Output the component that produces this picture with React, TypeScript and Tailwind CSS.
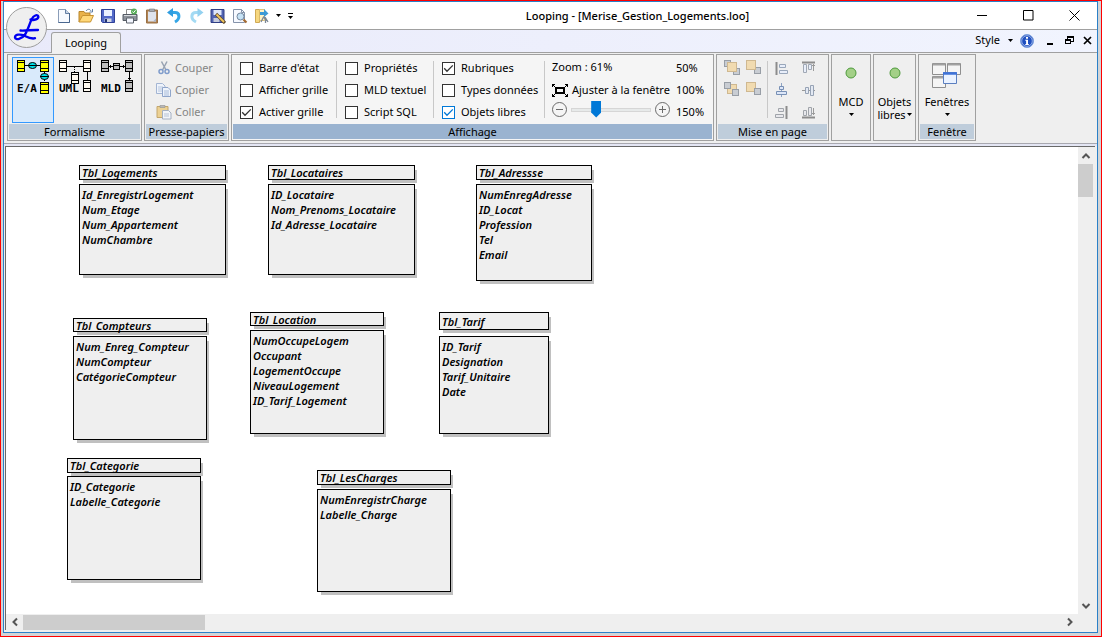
import { useState } from "react";
import type { ReactNode } from "react";

type Entity = {
  name: string;
  x: number;
  y: number;
  w: number;
  headH: number;
  gap: number;
  bodyH: number;
  fields: string[];
};

const ENTITIES: Entity[] = [
  { name: "Tbl_Logements", x: 73, y: 18, w: 147, headH: 15, gap: 4, bodyH: 91, fields: ["Id_EnregistrLogement", "Num_Etage", "Num_Appartement", "NumChambre"] },
  { name: "Tbl_Locataires", x: 262, y: 18, w: 147, headH: 15, gap: 4, bodyH: 91, fields: ["ID_Locataire", "Nom_Prenoms_Locataire", "Id_Adresse_Locataire"] },
  { name: "Tbl_Adressse", x: 470, y: 18, w: 116, headH: 15, gap: 4, bodyH: 97, fields: ["NumEnregAdresse", "ID_Locat", "Profession", "Tel", "Email"] },
  { name: "Tbl_Compteurs", x: 67, y: 171, w: 134, headH: 14, gap: 4, bodyH: 104, fields: ["Num_Enreg_Compteur", "NumCompteur", "CatégorieCompteur"] },
  { name: "Tbl_Location", x: 244, y: 165, w: 134, headH: 14, gap: 4, bodyH: 104, fields: ["NumOccupeLogem", "Occupant", "LogementOccupe", "NiveauLogement", "ID_Tarif_Logement"] },
  { name: "Tbl_Tarif", x: 433, y: 165, w: 110, headH: 18, gap: 6, bodyH: 98, fields: ["ID_Tarif", "Designation", "Tarif_Unitaire", "Date"] },
  { name: "Tbl_Categorie", x: 61, y: 311, w: 134, headH: 15, gap: 3, bodyH: 104, fields: ["ID_Categorie", "Labelle_Categorie"] },
  { name: "Tbl_LesCharges", x: 311, y: 323, w: 134, headH: 15, gap: 4, bodyH: 103, fields: ["NumEnregistrCharge", "Labelle_Charge"] },
];

function EntityBox({ e }: { e: Entity }) {
  return (
    <article
      className="absolute flex flex-col text-[11px] leading-[15px] font-semibold text-black italic"
      style={{ left: e.x, top: e.y, width: e.w, gap: e.gap }}
    >
      <h2
        className="flex items-center border border-black bg-[#efefef] px-0.5 whitespace-nowrap shadow-[3px_4px_0_-1px_#c0c0c0]"
        style={{ height: e.headH }}
      >
        {e.name}
      </h2>
      <ul
        className="border border-black bg-[#efefef] px-0.5 pt-0.5 whitespace-nowrap shadow-[3px_4px_0_-1px_#c0c0c0]"
        style={{ height: e.bodyH }}
      >
        {e.fields.map((f) => (
          <li key={f}>{f}</li>
        ))}
      </ul>
    </article>
  );
}

function Group({ title, className, tone = "bg-[#bfcddb]", bg = "bg-[#efefef]", children }: { title?: string; className: string; tone?: string; bg?: string; children: ReactNode }) {
  return (
    <section className={`flex shrink-0 flex-col border border-[#a0a0a0] p-px ${bg} ${className}`}>
      <div className="flex min-h-0 flex-1">{children}</div>
      {title && <h3 className={`h-[15px] text-center leading-[15px] whitespace-nowrap ${tone}`}>{title}</h3>}
    </section>
  );
}

function Check({ label, on = false, accent = false }: { label: string; on?: boolean; accent?: boolean }) {
  const [checked, setChecked] = useState(on);
  return (
    <label className="flex h-[22px] items-center gap-1.5 whitespace-nowrap">
      <span className="grid size-[13px]">
        <input
          type="checkbox"
          checked={checked}
          onChange={() => setChecked(!checked)}
          className={`col-start-1 row-start-1 size-[13px] appearance-none border bg-white ${accent ? "border-[#0078d7]" : "border-[#333333]"}`}
        />
        {checked && (
          <svg viewBox="0 0 13 13" className="pointer-events-none col-start-1 row-start-1 size-[13px]" fill="none" stroke={accent ? "#0078d7" : "#333333"} strokeWidth="1.3">
            <path d="M2.2 6.3 5 9.2 10.8 3.4" />
          </svg>
        )}
      </span>
      {label}
    </label>
  );
}

function Icon({ children, className = "size-4" }: { children: ReactNode; className?: string }) {
  return (
    <svg viewBox="0 0 16 16" className={className} fill="none" aria-hidden="true">
      {children}
    </svg>
  );
}

function Caret() {
  return (
    <svg viewBox="0 0 5 3" className="h-[3px] w-[5px] shrink-0" aria-hidden="true">
      <path d="M0 0h5L2.5 3z" fill="#000" />
    </svg>
  );
}

const quickTools: { label: string; icon: ReactNode }[] = [
  {
    label: "Nouveau",
    icon: (
      <Icon>
        <path d="M2.5 1.5h7l4 4v9h-11z" fill="#f7faff" stroke="#8b9db8" />
        <path d="M9.5 1.5v4h4" fill="#c5d3e6" stroke="#6580a5" />
        <path d="M13.5 5v9.5h-11" stroke="#49678f" />
      </Icon>
    ),
  },
  {
    label: "Ouvrir",
    icon: (
      <Icon>
        <path d="M1 14V3.5h5l1 1.5h5v3" fill="#e9b24a" stroke="#b8862c" />
        <path d="M4.5 7.5h11L12.5 14H1z" fill="#ffd879" stroke="#c79231" />
        <path d="M8 3c2-2.5 4-2 5 0M14.5 1v3h-3" stroke="#5f7fa6" />
      </Icon>
    ),
  },
  {
    label: "Enregistrer",
    icon: (
      <Icon>
        <path d="M1.5 1.5h13v13h-12l-1-1z" fill="#5269c8" stroke="#2e4096" />
        <path d="M4 2h8v6H4z" fill="#eaf1ff" />
        <path d="M4.5 10.5h7V14h-7z" fill="#d2d8e5" />
        <path d="M5 11h2v3H5z" fill="#24356f" />
      </Icon>
    ),
  },
  {
    label: "Imprimer",
    icon: (
      <Icon>
        <path d="M4.5 6V1.5h6V6" fill="#fff" stroke="#8a8a8a" />
        <path d="M1 6.5h14v6H1z" fill="#8d929a" stroke="#555b64" />
        <path d="M2 7.5h12" stroke="#d9dce0" />
        <path d="M4.5 10h7v5h-7z" fill="#f4f7ff" stroke="#5e646d" />
        <circle cx="12" cy="3.5" r="3" fill="#58ad58" />
        <path d="m10.5 3.5 1 1.2 2-2.4" stroke="#fff" />
      </Icon>
    ),
  },
  {
    label: "Coller",
    icon: (
      <Icon>
        <path d="M2.5 2h11v13h-11z" fill="#b08352" stroke="#9a7044" />
        <path d="M4 3.5h8v10H4z" fill="#dfe3ec" />
        <path d="M9 13.5l3-3v3z" fill="#a9b4c8" />
        <path d="M5.5 1h5v2.5h-5z" fill="#a7abb2" stroke="#72767d" strokeWidth=".6" />
      </Icon>
    ),
  },
  {
    label: "Annuler",
    icon: (
      <Icon>
        <path d="M5 4.5h4c5 0 5.5 6.5 0 9.5" stroke="#36a6e6" strokeWidth="3" />
        <path d="M7 0v9L1 4.5z" fill="#2f9de0" />
      </Icon>
    ),
  },
  {
    label: "Rétablir",
    icon: (
      <Icon>
        <path d="M11 4.5H8C3 4.5 2 11 8 14" stroke="#a3daf3" strokeWidth="3" />
        <path d="M9.5 0v9l6-4.5z" fill="#93d1f0" />
      </Icon>
    ),
  },
  {
    label: "Enregistrer sous",
    icon: (
      <Icon>
        <path d="M1 1.5h13v13H1z" fill="#5264b3" stroke="#303e85" />
        <path d="M3.5 2h8v5h-8z" fill="#dfe7fb" />
        <path d="M3.5 10h6v4h-6z" fill="#c6cbdc" />
        <path d="m6 6 9 9" stroke="#5d482a" strokeWidth="3.2" />
        <path d="m6.5 6.5 7.500 7.500" stroke="#f1c65e" strokeWidth="1.8" />
      </Icon>
    ),
  },
  {
    label: "Aperçu",
    icon: (
      <Icon>
        <path d="M1.5 1.5h8l3 3v10h-11z" fill="#f6f9ff" stroke="#8593aa" />
        <path d="M9.5 1.5v3h3" stroke="#8593aa" />
        <circle cx="8.5" cy="8.5" r="3.5" fill="#c6e2f5" stroke="#75889e" />
        <path d="m11.5 11.5 3 3" stroke="#a56b32" strokeWidth="2.2" />
      </Icon>
    ),
  },
  {
    label: "Exporter",
    icon: (
      <Icon>
        <path d="M1.5 1.5h4v13h-4z" fill="#f6d77f" stroke="#d0aa55" />
        <path d="M5.5 1.5h5v11h-5z" fill="#fff2c5" stroke="#d5b561" strokeWidth=".8" />
        <path d="M6 4h4V1l4.500 4.500-4.500 3.500V7H6z" fill="#3c9ad6" />
        <path d="m7 14 2.500-5 2 2v4M11 9l3 5" stroke="#7c8794" strokeWidth="1.3" />
      </Icon>
    ),
  },
];

function Node({ x, y, w = 8, fill }: { x: number; y: number; w?: number; fill: string }) {
  return (
    <g stroke="#000">
      <rect x={x + 0.5} y={y + 0.5} width={w - 1} height={w > 7 ? 11 : 10} fill={fill} />
      <path d={`M${x} ${y + 2.5}h${w}M${x} ${y + 8.5}h${w}`} />
    </g>
  );
}

function ModeLabel({ text }: { text: string }) {
  return (
    <text x="0" y="32" fontSize="11" fontWeight="700" fontFamily="DejaVu Sans Mono, Liberation Mono, monospace" fill="#000">
      {text}
    </text>
  );
}

function ModeButton({ active = false, label, children }: { active?: boolean; label: string; children: ReactNode }) {
  return (
    <button
      type="button"
      aria-label={label}
      aria-pressed={active}
      className={`flex h-[66px] w-[42px] items-start justify-center border pt-0.5 ${active ? "border-[#3399ff] bg-[#d9eafb]" : "border-transparent"}`}
    >
      <svg viewBox="0 0 33 34" className="h-[34px] w-[33px] shrink-0" fill="none" shapeRendering="crispEdges">
        {children}
      </svg>
    </button>
  );
}

function Separator() {
  return <div className="mt-[5px] h-[57px] w-px shrink-0 bg-[#c8c8c8]" />;
}

function Sq({ x, y, gold = false }: { x: number; y: number; gold?: boolean }) {
  return (
    <rect
      x={x}
      y={y}
      width={gold ? 9 : 6}
      height={gold ? 9 : 6}
      fill={gold ? "#f1dbb0" : "#c9cdd3"}
      stroke={gold ? "#cfb890" : "#989ea6"}
    />
  );
}

const layoutTools: { label: string; icon: ReactNode }[] = [
  { label: "Premier plan", icon: <Icon><Sq x={0.5} y={0.5} /><Sq x={9.5} y={8.5} /><Sq x={3.5} y={2.5} gold /></Icon> },
  { label: "Avancer", icon: <Icon><Sq x={8.5} y={7.5} /><Sq x={0.5} y={0.5} gold /></Icon> },
  { label: "Aligner à gauche", icon: <Icon><path d="M2.5 2v13" stroke="#8c8c8c" strokeWidth="2" /><path d="M5.5 4.500h6v3h-6zM5.500 10.500h8v3h-8z" fill="#e8eefa" stroke="#98a6ba" /></Icon> },
  { label: "Aligner en haut", icon: <Icon><path d="M2 2.500h13" stroke="#8c8c8c" strokeWidth="2" /><path d="M3.500 4.500h3v8h-3zM8.500 4.500h3v5h-3z" fill="#e8eefa" stroke="#a0a8b4" /><path d="M13.500 11V4M12 6l1.500-1.500L15 6" stroke="#9a9a9a" /></Icon> },
  { label: "Arrière-plan", icon: <Icon><Sq x={3.5} y={2.5} gold /><Sq x={0.5} y={0.5} /><Sq x={8.5} y={7.5} /></Icon> },
  { label: "Reculer", icon: <Icon><Sq x={0.5} y={0.5} gold /><Sq x={8.5} y={6.5} /></Icon> },
  { label: "Centrer horizontalement", icon: <Icon><path d="M7.500 1v14" stroke="#8da3c4" /><path d="M5.500 4.500h4v3h-4zM2.500 9.500h10v3h-10z" fill="#dce6f8" stroke="#7890b5" /></Icon> },
  { label: "Centrer verticalement", icon: <Icon><path d="M2 8.500h13" stroke="#999" /><path d="M5.500 5.500h3v6h-3zM10.500 3.500h3v10h-3z" fill="#e3e9f3" stroke="#97a3b5" /></Icon> },
  { label: "Aligner à droite", icon: <Icon><path d="M12.500 2v13" stroke="#8c8c8c" strokeWidth="2" /><path d="M4.500 4.500h5v3h-5zM1.500 10.500h8v3h-8z" fill="#e8e8ec" stroke="#a0a4aa" /></Icon> },
  { label: "Aligner en bas", icon: <Icon><path d="M2 13.500h13" stroke="#8c8c8c" strokeWidth="2" /><path d="M3.500 6.500h3v5h-3zM8.500 3.500h3v8h-3z" fill="#e8e8ec" stroke="#a0a4aa" /><path d="M13.500 4v7M12 9l1.500 1.500L15 9" stroke="#9a9a9a" /></Icon> },
];

function ToolGrid({ items, className }: { items: number[]; className: string }) {
  return (
    <div className={`grid content-start pt-px ${className}`}>
      {items.map((i) => (
        <button key={i} type="button" aria-label={layoutTools[i].label} className="flex h-[22px] items-center justify-center">
          {layoutTools[i].icon}
        </button>
      ))}
    </div>
  );
}

function Chevron({ d }: { d: string }) {
  return (
    <svg viewBox="0 0 10 10" className="size-[10px]" fill="none" stroke="#555555" strokeWidth="2" aria-hidden="true">
      <path d={d} />
    </svg>
  );
}

export default function App() {
  const [zoom, setZoom] = useState(24);
  return (
    <div className="flex min-h-screen w-full flex-col border border-[#ff0000] bg-[#d2d4d6] pr-[3px] pb-[3px] pl-0.5 font-['Noto_Sans','Open_Sans',sans-serif] text-[11px] text-black">
      <div className="relative flex flex-1 flex-col border border-[#2a80c8] bg-[#efefef]">
        <header>
          <div className="flex h-7 items-center border-b border-[#a0a0a0] bg-white pl-[49px]">
            {quickTools.map((t) => (
              <button key={t.label} type="button" aria-label={t.label} className="flex h-[22px] w-[22px] items-center justify-center">
                {t.icon}
              </button>
            ))}
            <button type="button" aria-label="Options d'export" className="flex w-2.5 justify-center">
              <Caret />
            </button>
            <button type="button" aria-label="Personnaliser" className="ml-px flex w-3 flex-col items-center gap-0.5">
              <span className="h-px w-[5px] bg-black" />
              <Caret />
            </button>
            <h1 className="flex-1 pl-5 text-center text-[11px] leading-4 font-medium whitespace-nowrap">Looping - [Merise_Gestion_Logements.loo]</h1>
            <button type="button" aria-label="Réduire" className="flex w-[46px] justify-center">
              <svg viewBox="0 0 11 11" className="size-[11px]" stroke="#000" fill="none"><path d="M0 5.500h10" /></svg>
            </button>
            <button type="button" aria-label="Agrandir" className="flex w-[46px] justify-center">
              <svg viewBox="0 0 11 11" className="size-[11px]" stroke="#000" fill="none"><path d="M.5.5h9.500v9.500H.5z" /></svg>
            </button>
            <button type="button" aria-label="Fermer" className="flex w-[46px] justify-center">
              <svg viewBox="0 0 11 11" className="size-[11px]" stroke="#000" fill="none"><path d="m.5.5 10 10M10.500.5l-10 10" /></svg>
            </button>
          </div>

          <div className="flex h-[23px] items-end border-b border-[#a0a0a0] bg-linear-to-r from-[#e9eafa] to-[#f1f4fe] pl-[47px]">
            <button type="button" role="tab" aria-selected="true" className="-mb-px h-[21px] w-[70px] rounded-t-[3px] border border-b-0 border-[#a0a0a0] bg-[#f1f1f1]">
              Looping
            </button>
            <div className="ml-auto flex h-[23px] items-center pr-px">
              <button type="button" className="flex items-center gap-2 pr-[7px]">
                Style
                <Caret />
              </button>
              <button type="button" aria-label="Informations" className="flex">
                <svg viewBox="0 0 14 14" className="size-[14px]">
                  <circle cx="7" cy="7" r="6.500" fill="#1f4fc0" stroke="#7da0dc" />
                  <circle cx="7" cy="7" r="5.300" fill="none" stroke="#c5d7f5" strokeWidth=".7" />
                  <path d="M6 3h2v1.800H6zM5.300 5.800H8v4.300h.8v1H5.300v-1h.8V6.800h-.8z" fill="#fff" />
                </svg>
              </button>
              <button type="button" aria-label="Réduire le document" className="ml-1.5 flex w-5 items-center justify-center pt-1.5">
                <span className="h-0.5 w-1.5 bg-black" />
              </button>
              <button type="button" aria-label="Restaurer le document" className="flex w-[18px] justify-center">
                <svg viewBox="0 0 9 9" className="size-[9px]" fill="none" stroke="#000" shapeRendering="crispEdges">
                  <path d="M2.500 3V.5h6v5H6M2 1.500h7M.5 3.500h5v4h-5zM0 4.500h6" />
                </svg>
              </button>
              <button type="button" aria-label="Fermer le document" className="flex w-[18px] justify-center">
                <svg viewBox="0 0 9 9" className="size-[9px]" stroke="#000" strokeWidth="1.700"><path d="m1 1 7 7M8 1 1 8" /></svg>
              </button>
            </div>
          </div>

          <button type="button" aria-label="Menu Looping" className="absolute top-[5px] left-0.5 flex size-[41px] items-center justify-center rounded-full border border-[#9d9d9d] bg-[#efefef]">
            <svg viewBox="0 0 41 41" className="size-[41px] shrink-0" fill="none" stroke="#0000f0" strokeWidth="2.300" strokeLinecap="round" strokeLinejoin="round">
              <path d="M24.500 12.500C28 13.800 33 12 32.300 9.300 31.500 7 27.500 8.500 25.800 12 23.500 16.500 22 23 19 27.500 16 32 9.500 33.500 9 30.500 8.800 27.500 14 26.800 18 28.500 22 30.500 25.500 32.500 29 31.200M14.500 23.500C20 23.800 26 22.800 32 23" />
            </svg>
          </button>
        </header>

        <div className="flex gap-0.5 border-b border-[#a8a8b0] pt-px pb-0.5 pl-[3px]">
          <Group title="Formalisme" className="h-[87px] w-[135px]">
            <div className="flex pt-px pl-[3px]">
              <ModeButton active label="E/A">
                <path d="M8 5.500h15M27.500 12v9" stroke="#000" />
                <Node x={0} y={0} fill="#ffff00" />
                <Node x={23} y={0} w={9} fill="#ffff00" />
                <Node x={23} y={22} w={9} fill="#ffff00" />
                <ellipse cx="15.500" cy="5.500" rx="4" ry="3" fill="#00e0e8" stroke="#000" shapeRendering="auto" />
                <path d="M11 5.500h9" stroke="#000" />
                <ellipse cx="27.500" cy="16.500" rx="4" ry="3" fill="#00e0e8" stroke="#000" shapeRendering="auto" />
                <path d="M23 16.500h9" stroke="#000" />
                <ModeLabel text="E/A" />
              </ModeButton>
              <ModeButton label="UML">
                <path d="M8 6.500h16M28.500 12v8" stroke="#000" />
                <path d="M15.500 7v5" stroke="#000" strokeDasharray="1 1" />
                <Node x={0} y={0} fill="#fffaf0" />
                <Node x={24} y={0} fill="#fffaf0" />
                <Node x={12} y={12} fill="#fffaf0" />
                <Node x={24} y={20} fill="#fffaf0" />
                <ModeLabel text="UML" />
              </ModeButton>
              <ModeButton label="MLD">
                <path d="M8 6.500h16M28.500 12v8M9.500 5v3M22.500 5v3M27 18.500h3" stroke="#000" />
                <Node x={0} y={0} fill="#bdbdbd" />
                <Node x={24} y={0} fill="#bdbdbd" />
                <Node x={24} y={20} fill="#bdbdbd" />
                <path d="M12.500 3.500h6v6h-6zM12 5.500h7" fill="#bdbdbd" stroke="#000" />
                <ModeLabel text="MLD" />
              </ModeButton>
            </div>
          </Group>

          <Group title="Presse-papiers" className="h-[87px] w-[85px]">
            <div className="flex flex-col pt-px pl-2.5 text-[#858585]">
              <button type="button" className="flex h-[22px] items-center gap-[3px]">
                <Icon>
                  <path d="M5.500 1.500 10 10M11 1.500 6.500 10" stroke="#97a2b2" strokeWidth="1.500" />
                  <circle cx="5" cy="11.500" r="2" stroke="#7f9ccb" strokeWidth="1.500" />
                  <circle cx="11" cy="11.500" r="2" stroke="#7f9ccb" strokeWidth="1.500" />
                </Icon>
                Couper
              </button>
              <button type="button" className="flex h-[22px] items-center gap-[3px]">
                <Icon>
                  <path d="M.5 1.500h6l2.500 2.500v7.500H.5z" fill="#eef3fb" stroke="#a3b5d3" />
                  <path d="M2 5h5M2 7h5M2 9h5" stroke="#b8c7de" />
                  <path d="M6.500 5.500h5.500l2.500 2.500v6.500h-8z" fill="#eef3fb" stroke="#8fa5ca" />
                  <path d="M8 9h5M8 11h5M8 13h5" stroke="#a9bcd9" />
                </Icon>
                Copier
              </button>
              <button type="button" className="flex h-[22px] items-center gap-[3px]">
                <Icon>
                  <path d="M1 2.500h11v11H1z" fill="#ecd193" stroke="#c3a66c" />
                  <path d="M4 1.500h5v2H4z" fill="#b9b9b9" stroke="#999" strokeWidth=".7" />
                  <path d="M6.500 6.500h6l2.500 2.500v6H6.500z" fill="#f1f4f9" stroke="#a4b0c2" />
                  <path d="M8 10h5M8 12h5" stroke="#b7c3d5" />
                </Icon>
                Coller
              </button>
            </div>
          </Group>

          <Group title="Affichage" tone="bg-[#9ab3d0]" bg="bg-[#f5f5f5]" className="h-[87px] w-[483px]">
            <div className="w-[103px] pt-px pl-[7px]">
              <Check label="Barre d'état" />
              <Check label="Afficher grille" />
              <Check label="Activer grille" on />
            </div>
            <Separator />
            <div className="w-24 pt-px pl-2">
              <Check label="Propriétés" />
              <Check label="MLD textuel" />
              <Check label="Script SQL" />
            </div>
            <Separator />
            <div className="w-[110px] pt-px pl-2">
              <Check label="Rubriques" on />
              <Check label="Types données" />
              <Check label="Objets libres" on accent />
            </div>
            <Separator />
            <div className="w-[131px] pl-[7px]">
              <div className="flex h-[23px] items-center">Zoom : 61%</div>
              <button type="button" className="flex h-[22px] items-center gap-1 whitespace-nowrap">
                <svg viewBox="0 0 16 13" className="h-[13px] w-4" fill="none" stroke="#000" shapeRendering="crispEdges">
                  <path d="M4 4h8v5H4z" strokeWidth="2" />
                  <path d="M.5 3V.5H3M13 .5h2.500V3M15.500 10v2.500H13M3 12.500H.5V10" />
                  <path d="m1 1 3 3M15 1l-3 3M1 12l3-3M15 12l-3-3" />
                </svg>
                Ajuster à la fenêtre
              </button>
              <div className="flex h-[17px] items-center gap-1">
                <button type="button" aria-label="Zoom arrière" className="flex">
                  <svg viewBox="0 0 15 15" className="size-[15px]" fill="none" stroke="#6b6b6b"><circle cx="7.500" cy="7.500" r="7" /><path d="M4 7.500h7" /></svg>
                </button>
                <input
                  type="range"
                  aria-label="Niveau de zoom"
                  min={0}
                  max={85}
                  value={zoom}
                  onChange={(ev) => setZoom(Number(ev.target.value))}
                  className="h-[17px] w-20 appearance-none bg-transparent [&::-webkit-slider-runnable-track]:h-1 [&::-webkit-slider-runnable-track]:border [&::-webkit-slider-runnable-track]:border-[#d6d6d6] [&::-webkit-slider-runnable-track]:bg-[#e7eaea] [&::-webkit-slider-thumb]:-mt-2 [&::-webkit-slider-thumb]:h-[17px] [&::-webkit-slider-thumb]:w-2.5 [&::-webkit-slider-thumb]:appearance-none [&::-webkit-slider-thumb]:bg-[#0078d7] [&::-webkit-slider-thumb]:[clip-path:polygon(0_0,100%_0,100%_70%,50%_100%,0_70%)]"
                />
                <button type="button" aria-label="Zoom avant" className="flex">
                  <svg viewBox="0 0 15 15" className="size-[15px]" fill="none" stroke="#6b6b6b"><circle cx="7.500" cy="7.500" r="7" /><path d="M4 7.500h7M7.500 4v7" /></svg>
                </button>
              </div>
            </div>
            <div className="flex flex-col items-start pt-px">
              <button type="button" className="h-[22px]">50%</button>
              <button type="button" className="h-[22px]">100%</button>
              <button type="button" className="h-[22px]">150%</button>
            </div>
          </Group>

          <Group title="Mise en page" className="h-[87px] w-[113px]">
            <ToolGrid items={[0, 1, 4, 5]} className="w-[49px] grid-cols-[22px_22px] pl-[3px]" />
            <Separator />
            <ToolGrid items={[2, 3, 6, 7, 8, 9]} className="grid-cols-[26px_26px] pl-px" />
          </Group>

          <Group className="h-[87px] w-10">
            <button type="button" className="flex flex-1 flex-col items-center pt-[11px]">
              <svg viewBox="0 0 12 12" className="size-3"><circle cx="6" cy="6" r="5" fill="#a3d087" stroke="#4e9a3c" /></svg>
              <span className="mt-4 leading-[13px]">MCD</span>
              <span className="mt-[5px]"><Caret /></span>
            </button>
          </Group>

          <Group className="h-[87px] w-[43px]">
            <button type="button" className="flex flex-1 flex-col items-center pt-[11px]">
              <svg viewBox="0 0 12 12" className="size-3"><circle cx="6" cy="6" r="5" fill="#a3d087" stroke="#4e9a3c" /></svg>
              <span className="mt-4 leading-[13px]">Objets</span>
              <span className="flex items-center gap-px leading-[13px]">libres<Caret /></span>
            </button>
          </Group>

          <Group title="Fenêtre" className="h-[87px] w-[58px]">
            <button type="button" className="flex flex-1 flex-col items-center pt-[7px]">
              <svg viewBox="0 0 30 26" className="h-[26px] w-[30px]" fill="#f5f5f5" stroke="#8f8f8f">
                <path d="M.5.5h13v11H.5zM15.500.5h13v11h-13zM.5 13.500h13v11H.5z" />
                <path d="M1 1.500h12M16 1.500h12M1 14.500h12" strokeWidth="2" stroke="#a2a2a2" />
                <path d="M11.500 9.500h13v11h-13z" fill="#eaf2ff" stroke="#5b7fc0" />
                <path d="M11 10.500h14" strokeWidth="2.500" stroke="#3f73d8" />
              </svg>
              <span className="mt-1.5 leading-[13px]">Fenêtres</span>
              <span className="mt-[5px]"><Caret /></span>
            </button>
          </Group>
        </div>
        <div className="h-0.5 bg-[#e4e6f4]" />

        <main className="mr-0.5 mb-0.5 ml-px grid flex-1 grid-cols-[1fr_17px] grid-rows-[1fr_16px] border-t border-l border-[#696969] bg-[#efefef]">
          <div className="relative overflow-hidden bg-white">
            {ENTITIES.map((e) => (
              <EntityBox key={e.name} e={e} />
            ))}
          </div>
          <div className="flex flex-col items-center pr-0.5">
            <button type="button" aria-label="Défiler vers le haut" className="flex h-[17px] items-center">
              <Chevron d="M1.500 7 5 3.500 8.500 7" />
            </button>
            <div className="h-[33px] w-[15px] bg-[#cdcdcd]" />
            <button type="button" aria-label="Défiler vers le bas" className="mt-auto flex h-[17px] items-center">
              <Chevron d="M1.500 3 5 6.500 8.500 3" />
            </button>
          </div>
          <div className="flex items-center">
            <button type="button" aria-label="Défiler vers la gauche" className="flex h-4 w-[17px] items-center justify-center">
              <Chevron d="M7 1.500 3.500 5 7 8.500" />
            </button>
            <div className="h-[15px] w-[182px] bg-[#cdcdcd]" />
            <button type="button" aria-label="Défiler vers la droite" className="ml-auto flex h-4 w-[17px] items-center justify-center">
              <Chevron d="M3 1.500 6.500 5 3 8.500" />
            </button>
          </div>
        </main>
      </div>
    </div>
  );
}
